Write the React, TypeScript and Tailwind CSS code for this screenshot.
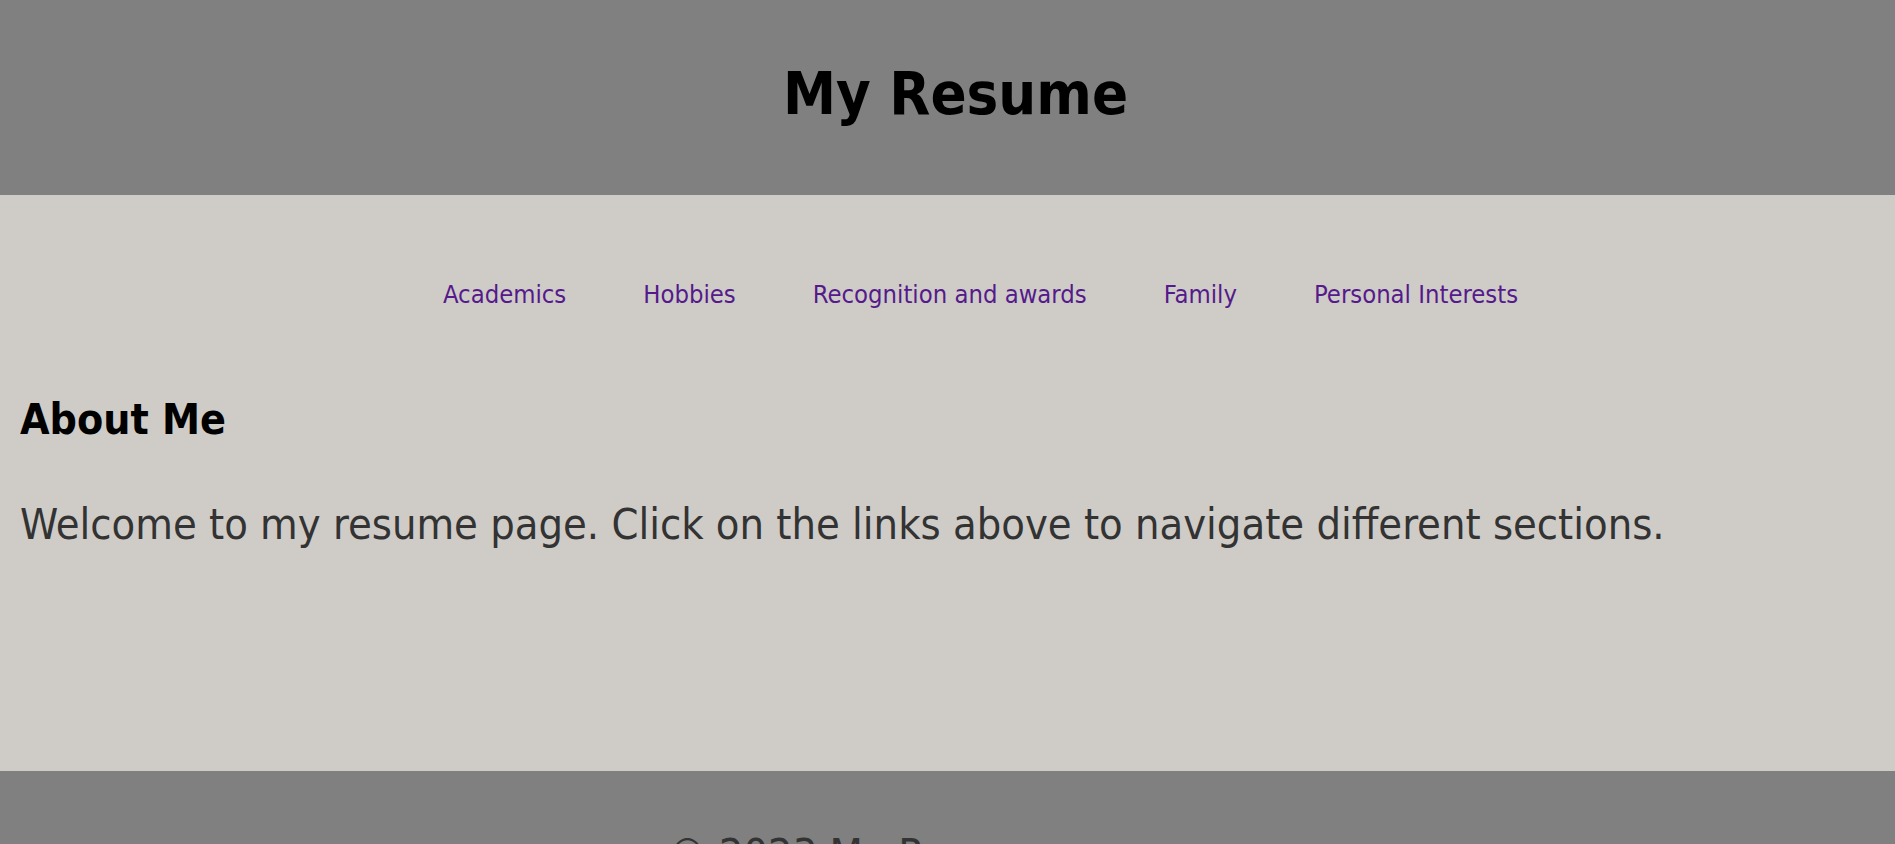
const links = ['Academics', 'Hobbies', 'Recognition and awards', 'Family', 'Personal Interests'];

export default function App() {
  return (
    <div className="min-h-screen bg-[#cfccc7] font-['DejaVu_Sans_Condensed','DejaVu_Sans',sans-serif]">
      <header className="h-[195px] bg-[#808080] pt-[64px] pl-[16px] text-center">
        <h1 className="text-[59.3px] font-bold leading-none text-black">My Resume</h1>
      </header>

      <main className="h-[576px] px-5 pt-[87px]">
        <nav className="flex justify-center gap-[77px] pl-[66px]">
          {links.map(link => (
            <a key={link} href="#" className="text-[25.4px] leading-none text-[#551a8b]">
              {link}
            </a>
          ))}
        </nav>

        <h2 className="mt-[92px] text-[42.5px] font-bold leading-none text-black">About Me</h2>
        <p className="mt-[61px] text-[43px] leading-none text-[#333333]">
          Welcome to my resume page. Click on the links above to navigate different sections.
        </p>
      </main>

      <footer className="flex h-[120px] justify-center bg-[#808080] pt-[62px] pr-[174px]">
        <p className="text-[43px] leading-none text-[#333333]">© 2023 My Resume</p>
      </footer>
    </div>
  );
}
